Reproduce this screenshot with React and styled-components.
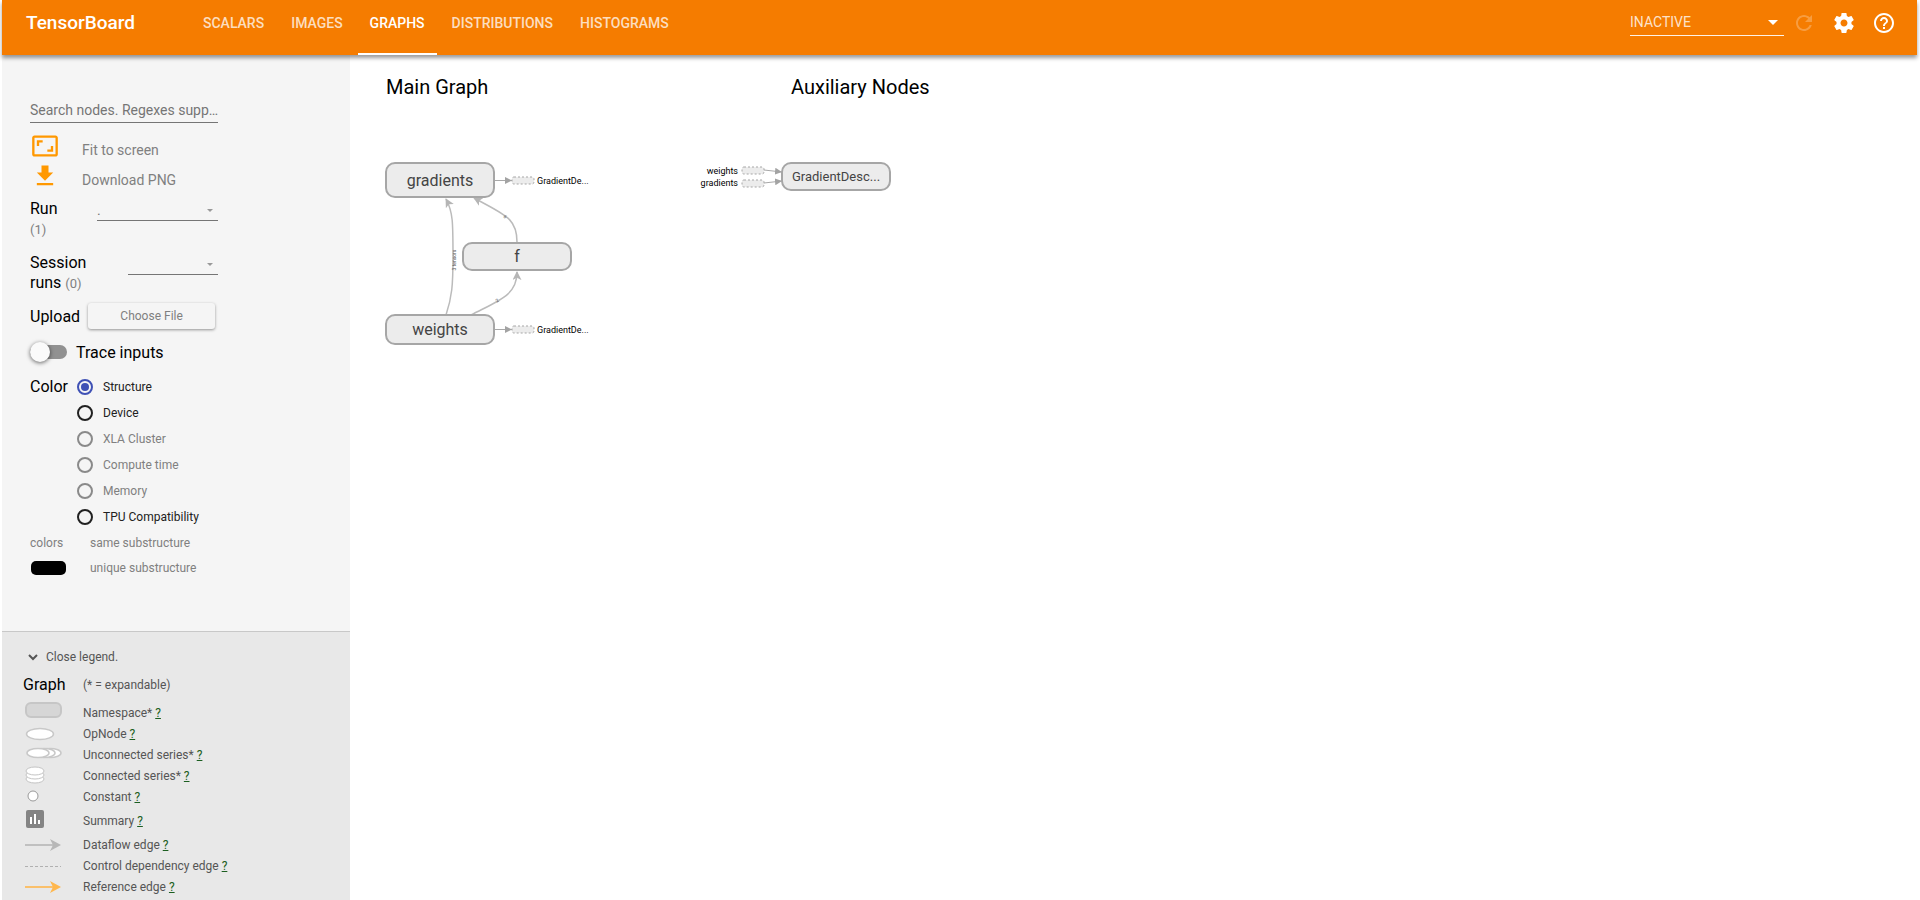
import React from "react";
import styled, { createGlobalStyle } from "styled-components";

const Global = createGlobalStyle`
  *, *::before, *::after { box-sizing: border-box; }
  body { margin: 0; background: #fff; font-family: Roboto, "Liberation Sans", sans-serif; }
  button, input, select { font-family: inherit; }
`;

const Page = styled.div`
  display: flex;
  flex-direction: column;
  min-height: 100vh;
  padding: 0 3px 0 2px;
`;

const Toolbar = styled.header`
  position: relative;
  display: flex;
  align-items: stretch;
  height: 55px;
  padding: 0 21px 0 24px;
  background: #f57c00;
  color: #fff;
  box-shadow: 0 3px 4px rgba(0, 0, 0, 0.4);
`;

const Brand = styled.h1`
  width: 165px;
  margin: 0;
  font-size: 19px;
  font-weight: 500;
  line-height: 46px;
`;

const Tabs = styled.nav`
  display: flex;
  flex: 1;
  gap: 3px;
`;

const Tab = styled.a`
  padding: 0 12px;
  border-bottom: 2px solid ${(p) => (p.$active ? "#fff" : "transparent")};
  color: ${(p) => (p.$active ? "#fff" : "rgba(255, 255, 255, 0.76)")};
  font-size: 14px;
  font-weight: 500;
  line-height: 46px;
  text-decoration: none;
`;

const Tools = styled.div`
  display: flex;
  align-items: center;
  gap: 8px;
  height: 46px;
`;

const ToolIcons = styled.div`
  display: flex;
  gap: 16px;
`;

const SelectBox = styled.div`
  position: relative;
  width: ${(p) => p.$width}px;
`;

const Caret = styled.svg`
  position: absolute;
  top: ${(p) => p.$top}px;
  right: ${(p) => p.$right}px;
  width: ${(p) => p.$size}px;
  height: ${(p) => p.$size / 2}px;
  pointer-events: none;
`;

const StatusSelect = styled.select`
  display: block;
  width: 100%;
  height: 26px;
  padding: 0 0 2px;
  appearance: none;
  border: 0;
  border-bottom: 1px solid rgba(255, 255, 255, 0.9);
  border-radius: 0;
  background: transparent;
  color: rgba(255, 255, 255, 0.8);
  font-size: 14px;
`;

const IconButton = styled.button`
  display: flex;
  padding: 0;
  border: 0;
  background: none;
  color: #fff;
  opacity: ${(p) => (p.disabled ? 0.25 : 1)};
`;

const Body = styled.div`
  display: flex;
  flex: 1;
`;

const Sidebar = styled.aside`
  display: flex;
  flex-direction: column;
  width: 348px;
  background: #f5f5f5;
`;

const Controls = styled.form`
  display: flex;
  flex-direction: column;
  width: 216px;
  height: 576px;
  padding: 42px 0 0 28px;
`;

const Search = styled.input`
  width: 100%;
  height: 26px;
  padding: 0;
  border: 0;
  border-bottom: 1px solid #757575;
  background: transparent;
  font-size: 14px;
  outline: 0;
  &::placeholder { color: #757575; opacity: 1; }
`;

const Actions = styled.div`
  display: flex;
  flex-direction: column;
  padding: 9px 0 7px;
`;

const Action = styled.button`
  display: flex;
  align-items: flex-start;
  height: 30px;
  padding: 0 0 0 1px;
  border: 0;
  background: none;
  color: #808080;
  font-size: 14px;
  line-height: 36px;
  text-align: left;
`;

const ActionIcon = styled.svg`
  width: 28px;
  height: 28px;
  margin-right: 23px;
  fill: #ff9800;
`;

const Field = styled.div`
  display: flex;
  align-items: flex-start;
  justify-content: space-between;
  height: ${(p) => p.$height}px;
`;

const FieldLabel = styled.label`
  width: ${(p) => p.$width}px;
  font-size: 16px;
  line-height: 20px;
`;

const Count = styled.span`
  color: #808080;
  font-size: 13px;
`;

const FieldSelect = styled.select`
  display: block;
  width: 100%;
  height: 22px;
  padding: 0;
  appearance: none;
  border: 0;
  border-bottom: 1px solid #757575;
  border-radius: 0;
  background: transparent;
  color: #757575;
  font-size: 14px;
`;

const UploadRow = styled.div`
  display: flex;
  align-items: center;
  gap: 8px;
  height: 26px;
  font-size: 16px;
`;

const FileButton = styled.button`
  width: 127px;
  height: 26px;
  border: 0;
  border-radius: 3px;
  background: #f5f5f5;
  box-shadow: 0 1px 3px rgba(0, 0, 0, 0.4);
  color: #808080;
  font-size: 12px;
`;

const TraceRow = styled.label`
  display: flex;
  align-items: center;
  gap: 9px;
  margin-top: 13px;
  height: 20px;
  font-size: 16px;
`;

const Toggle = styled.input`
  display: flex;
  align-items: center;
  width: 37px;
  height: 14px;
  margin: 0;
  appearance: none;
  border-radius: 8px;
  background: #919191;
  &::before {
    content: "";
    width: 20px;
    height: 20px;
    border-radius: 50%;
    background: #fafafa;
    box-shadow: 0 1px 4px rgba(0, 0, 0, 0.6);
  }
`;

const ColorRow = styled.fieldset`
  display: grid;
  grid-template-columns: 47px 1fr;
  margin: 12px 0 0;
  padding: 0;
  border: 0;
  font-size: 16px;
  line-height: 26px;
`;

const RadioList = styled.div`
  display: flex;
  flex-direction: column;
`;

const RadioLabel = styled.label`
  display: flex;
  align-items: center;
  gap: 10px;
  height: 26px;
  color: ${(p) => (p.$muted ? "#808080" : "#212121")};
  font-size: 12px;
`;

const Radio = styled.input`
  display: grid;
  place-items: center;
  width: 16px;
  height: 16px;
  margin: 0;
  appearance: none;
  border: 2px solid #212121;
  border-radius: 50%;
  &:disabled { border-color: #8a8a8a; }
  &:checked { border-color: #3f51b5; }
  &:checked::before {
    content: "";
    width: 8px;
    height: 8px;
    border-radius: 50%;
    background: #3f51b5;
  }
`;

const SwatchRow = styled.div`
  display: grid;
  grid-template-columns: 60px 1fr;
  align-items: center;
  height: 25px;
  color: #808080;
  font-size: 12px;
`;

const Swatch = styled.span`
  width: 35px;
  height: 14px;
  margin-left: 1px;
  border-radius: 5px;
  background: #000;
`;

const Legend = styled.section`
  flex: 1;
  padding: 14px 0 0 21px;
  border-top: 1px solid #c8c8c8;
  background: #e8e8e8;
  color: #555;
  font-size: 12px;
`;

const LegendToggle = styled.button`
  display: flex;
  align-items: center;
  gap: 8px;
  height: 22px;
  padding: 0 0 0 5px;
  border: 0;
  background: none;
  color: #555;
  font-size: 12px;
`;

const LegendRow = styled.div`
  display: grid;
  grid-template-columns: 60px 1fr;
  align-items: center;
  height: ${(p) => p.$height || 21}px;
`;

const LegendHead = styled(LegendRow)`
  margin: 6px 0 7px;
`;

const LegendTitle = styled.h2`
  margin: 0;
  color: #000;
  font-size: 16px;
  font-weight: 400;
`;

const LegendIcon = styled.svg`
  display: block;
  overflow: visible;
`;

const Help = styled.a`
  color: #1b5e20;
`;

const Canvas = styled.main`
  flex: 1;
  min-width: 0;
  padding: 20px 0 0 36px;
`;

const Titles = styled.div`
  display: grid;
  grid-template-columns: 405px 1fr;
`;

const Title = styled.h2`
  margin: 0;
  font-size: 20px;
  font-weight: 400;
  line-height: 24px;
`;

const Diagram = styled.svg`
  display: block;
  margin-top: 56px;
  overflow: visible;
`;

const CaretIcon = ({ color, ...rest }) => (
  <Caret viewBox="0 0 10 5" fill={color} aria-hidden="true" {...rest}><path d="M0 0h10L5 5z" /></Caret>
);

const MaterialIcon = ({ d }) => (
  <svg width="24" height="24" viewBox="0 0 24 24" fill="currentColor" aria-hidden="true"><path d={d} /></svg>
);

const REFRESH = "M17.65 6.35C16.2 4.9 14.21 4 12 4c-4.42 0-7.99 3.58-7.99 8s3.57 8 7.99 8c3.73 0 6.84-2.55 7.73-6h-2.08c-.82 2.33-3.04 4-5.65 4-3.31 0-6-2.69-6-6s2.69-6 6-6c1.66 0 3.14.69 4.22 1.78L13 11h7V4l-2.35 2.35z";
const SETTINGS = "M19.43 12.98c.04-.32.07-.64.07-.98s-.03-.66-.07-.98l2.11-1.65c.19-.15.24-.42.12-.64l-2-3.46c-.12-.22-.39-.3-.61-.22l-2.49 1c-.52-.4-1.08-.73-1.69-.98l-.38-2.65C14.46 2.18 14.25 2 14 2h-4c-.25 0-.46.18-.49.42l-.38 2.65c-.61.25-1.17.59-1.69.98l-2.49-1c-.23-.09-.49 0-.61.22l-2 3.46c-.13.22-.07.49.12.64l2.11 1.65c-.04.32-.07.65-.07.98s.03.66.07.98l-2.11 1.65c-.19.15-.24.42-.12.64l2 3.46c.12.22.39.3.61.22l2.49-1c.52.4 1.08.73 1.69.98l.38 2.65c.03.24.24.42.49.42h4c.25 0 .46-.18.49-.42l.38-2.65c.61-.25 1.17-.59 1.69-.98l2.49 1c.23.09.49 0 .61-.22l2-3.46c.12-.22.07-.49-.12-.64l-2.11-1.65zM12 15.5c-1.93 0-3.5-1.57-3.5-3.5s1.57-3.5 3.5-3.5 3.5 1.57 3.5 3.5-1.57 3.5-3.5 3.5z";
const HELP = "M11 18h2v-2h-2v2zm1-16C6.48 2 2 6.48 2 12s4.48 10 10 10 10-4.48 10-10S17.52 2 12 2zm0 18c-4.41 0-8-3.59-8-8s3.59-8 8-8 8 3.59 8 8-3.59 8-8 8zm0-14c-2.21 0-4 1.79-4 4h2c0-1.1.9-2 2-2s2 .9 2 2c0 2-3 1.75-3 5h2c0-2.25 3-2.5 3-5 0-2.21-1.79-4-4-4z";
const FIT = "M19 12h-2v3h-3v2h5v-5zM7 9h3V7H5v5h2V9zm14-6H3c-1.1 0-2 .9-2 2v14c0 1.1.9 2 2 2h18c1.1 0 2-.9 2-2V5c0-1.1-.9-2-2-2zm0 16.01H3V4.99h18v14.02z";
const DOWNLOAD = "M19 9h-4V3H9v6H5l7 7 7-7zM5 18v2h14v-2H5z";

const TABS = ["SCALARS", "IMAGES", "GRAPHS", "DISTRIBUTIONS", "HISTOGRAMS"];

const COLORS = [
  ["Structure", false],
  ["Device", false],
  ["XLA Cluster", true],
  ["Compute time", true],
  ["Memory", true],
  ["TPU Compatibility", false],
];

const Arrow = ({ color }) => (
  <g stroke={color} fill={color}>
    <path d="M2 10h28" strokeWidth="2" opacity="0.8" />
    <path d="M27 4l11 6-11 6 3-6z" stroke="none" />
  </g>
);

const LEGEND = [
  ["Namespace*", 21, <rect x="3" y="0" width="35" height="14" rx="5" fill="#d6d6d6" stroke="#c6c6c6" strokeWidth="2" />],
  ["OpNode", 21, <ellipse cx="17" cy="10" rx="13.500" ry="5.500" fill="#fff" stroke="#c8c8c8" strokeWidth="1.500" />],
  ["Unconnected series*", 21, (
    <g fill="#fff" stroke="#c8c8c8" strokeWidth="1.500">
      <ellipse cx="27" cy="8" rx="11" ry="4.500" />
      <ellipse cx="21" cy="8" rx="11" ry="4.500" />
      <ellipse cx="15" cy="8" rx="11" ry="4.500" />
    </g>
  )],
  ["Connected series*", 21, (
    <g fill="#fff" stroke="#c4c4c4" strokeWidth="1">
      <ellipse cx="12" cy="13" rx="9" ry="4" />
      <ellipse cx="12" cy="9" rx="9" ry="4" />
      <ellipse cx="12" cy="5" rx="9" ry="4" />
    </g>
  )],
  ["Constant", 21, <circle cx="10" cy="9" r="5" fill="#fff" stroke="#999" strokeWidth="1" />],
  ["Summary", 27, (
    <g>
      <rect x="3" y="-1" width="18" height="18" rx="2" fill="#848484" />
      <path d="M7 6h2v7H7zM11 3h2v10h-2zM15 9h2v4h-2z" fill="#fff" />
    </g>
  )],
  ["Dataflow edge", 21, <Arrow color="#b7b7b7" />],
  ["Control dependency edge", 21, <path d="M2 10.500h36" stroke="#b0b0b0" strokeWidth="1" strokeDasharray="3 2" />],
  ["Reference edge", 21, <Arrow color="#ffb74d" />],
];

const Node = ({ x, y, w, h, size, label }) => (
  <g>
    <rect x={x} y={y} width={w} height={h} rx="9" fill="#ececec" stroke="#a6a6a6" strokeWidth="2" />
    <text x={x + w / 2} y={y + h / 2} dy="0.35em" fontSize={size} fill="#444" textAnchor="middle">{label}</text>
  </g>
);

const Annotation = ({ x, y, w }) => (
  <rect x={x} y={y} width={w} height="7" rx="2" fill="#ececec" stroke="#a6a6a6" strokeWidth="1" strokeDasharray="2 2" />
);

const Graph = () => (
  <Diagram width="520" height="190" viewBox="386 155 520 190" role="img" aria-label="Graph structure">
    <defs>
      <marker id="flow" viewBox="0 0 10 10" refX="9" refY="5" markerWidth="9" markerHeight="9" markerUnits="userSpaceOnUse" orient="auto">
        <path d="M0 0L10 5L0 10L2.5 5z" fill="#b5b5b5" />
      </marker>
      <marker id="side" viewBox="0 0 10 10" refX="10" refY="5" markerWidth="7" markerHeight="7" markerUnits="userSpaceOnUse" orient="auto">
        <path d="M0 0L10 5L0 10z" fill="#a3a3a3" />
      </marker>
    </defs>
    <g fill="none" stroke="#bbb" strokeWidth="1.5">
      <path d="M446 315C452 297 453 285 453 257C453 222 453 212 446 199" markerEnd="url(#flow)" />
      <path d="M471 315C500 300 517 295 517 272" markerEnd="url(#flow)" />
      <path d="M517 242C517 218 505 215 474 198" markerEnd="url(#flow)" />
    </g>
    <g fill="none" stroke="#a8a8a8" strokeWidth="1">
      <path d="M494 180.500H512" markerEnd="url(#side)" />
      <path d="M494 329.500H512" markerEnd="url(#side)" />
      <path d="M764 170L782 172" markerEnd="url(#side)" />
      <path d="M764 183L782 181" markerEnd="url(#side)" />
    </g>
    <g fontSize="5" fill="#555" textAnchor="middle">
      <text transform="translate(456 260) rotate(-90)">3 tensors</text>
      <text transform="translate(504 218) rotate(40)">6</text>
      <text transform="translate(498 302) rotate(-30)">2</text>
    </g>
    <Node x={386} y={163} w={108} h={34} size={16} label="gradients" />
    <Node x={463} y={243} w={108} h={27} size={16} label="f" />
    <Node x={386} y={315} w={108} h={29} size={16} label="weights" />
    <Node x={782} y={163} w={108} h={27} size={13} label="GradientDesc..." />
    <Annotation x={512} y={177} w={22} />
    <Annotation x={512} y={326} w={22} />
    <Annotation x={742} y={167} w={22} />
    <Annotation x={742} y={180} w={22} />
    <g fontSize="9" fill="#000">
      <text x="537" y="184">GradientDe...</text>
      <text x="537" y="333">GradientDe...</text>
      <text x="738" y="174" textAnchor="end">weights</text>
      <text x="738" y="186" textAnchor="end">gradients</text>
    </g>
  </Diagram>
);

export default function App() {
  return (
    <Page>
      <Global />
      <Toolbar>
        <Brand>TensorBoard</Brand>
        <Tabs>
          {TABS.map((t) => (
            <Tab key={t} href={"#" + t.toLowerCase()} $active={t === "GRAPHS"}>{t}</Tab>
          ))}
        </Tabs>
        <Tools>
          <SelectBox $width={154}>
            <StatusSelect aria-label="Plugin"><option>INACTIVE</option></StatusSelect>
            <CaretIcon color="#fff" $top={10} $right={6} $size={10} />
          </SelectBox>
          <ToolIcons>
            <IconButton type="button" aria-label="Reload" disabled><MaterialIcon d={REFRESH} /></IconButton>
            <IconButton type="button" aria-label="Settings"><MaterialIcon d={SETTINGS} /></IconButton>
            <IconButton type="button" aria-label="Help"><MaterialIcon d={HELP} /></IconButton>
          </ToolIcons>
        </Tools>
      </Toolbar>
      <Body>
        <Sidebar>
          <Controls>
            <Search type="text" aria-label="Search nodes" placeholder="Search nodes. Regexes supp…" />
            <Actions>
              <Action type="button">
                <ActionIcon viewBox="0 0 24 24" aria-hidden="true"><path d={FIT} /></ActionIcon>
                Fit to screen
              </Action>
              <Action type="button">
                <ActionIcon viewBox="0 0 24 24" aria-hidden="true"><path d={DOWNLOAD} /></ActionIcon>
                Download PNG
              </Action>
            </Actions>
            <Field $height={54}>
              <FieldLabel htmlFor="run" $width={40}>Run <Count>(1)</Count></FieldLabel>
              <SelectBox $width={121}>
                <FieldSelect id="run"><option>.</option></FieldSelect>
                <CaretIcon color="#999" $top={10} $right={5} $size={6} />
              </SelectBox>
            </Field>
            <Field $height={50}>
              <FieldLabel htmlFor="session" $width={64}>Session runs <Count>(0)</Count></FieldLabel>
              <SelectBox $width={90}>
                <FieldSelect id="session"><option></option></FieldSelect>
                <CaretIcon color="#999" $top={10} $right={5} $size={6} />
              </SelectBox>
            </Field>
            <UploadRow>
              <span id="upload">Upload</span>
              <FileButton type="button" aria-describedby="upload">Choose File</FileButton>
            </UploadRow>
            <TraceRow>
              <Toggle type="checkbox" role="switch" />
              Trace inputs
            </TraceRow>
            <ColorRow aria-labelledby="color">
              <span id="color">Color</span>
              <RadioList>
                {COLORS.map(([name, off], i) => (
                  <RadioLabel key={name} $muted={off}>
                    <Radio type="radio" name="color" disabled={off} defaultChecked={i === 0} />
                    {name}
                  </RadioLabel>
                ))}
              </RadioList>
            </ColorRow>
            <SwatchRow><span>colors</span><span>same substructure</span></SwatchRow>
            <SwatchRow><Swatch /><span>unique substructure</span></SwatchRow>
          </Controls>
          <Legend>
            <LegendToggle type="button">
              <svg width="10" height="7" viewBox="0 0 10 7" fill="none" stroke="#555" strokeWidth="2" aria-hidden="true"><path d="M1 1l4 4 4-4" /></svg>
              Close legend.
            </LegendToggle>
            <LegendHead>
              <LegendTitle>Graph</LegendTitle>
              <span>(* = expandable)</span>
            </LegendHead>
            {LEGEND.map(([name, height, icon]) => (
              <LegendRow key={name} $height={height}>
                <LegendIcon width="42" height="20" viewBox="0 0 42 20" aria-hidden="true">{icon}</LegendIcon>
                <span>{name} <Help href="#help" aria-label={"About " + name}>?</Help></span>
              </LegendRow>
            ))}
          </Legend>
        </Sidebar>
        <Canvas>
          <Titles>
            <Title>Main Graph</Title>
            <Title>Auxiliary Nodes</Title>
          </Titles>
          <Graph />
        </Canvas>
      </Body>
    </Page>
  );
}
